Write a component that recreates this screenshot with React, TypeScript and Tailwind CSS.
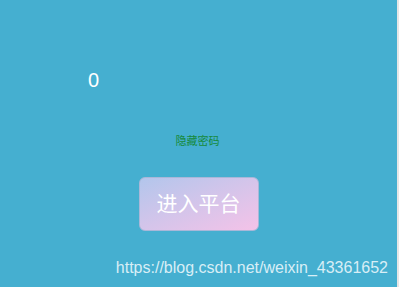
export default function App() {
    return (
        <div className="flex h-[287px] w-[399px] bg-[#e6e6e6]" style={{ fontFamily: '"Liberation Sans", "Noto Sans CJK SC", sans-serif' }}>
            <div className="relative flex h-full w-[397px] flex-col bg-[#45afd0]">
                {/* Counter */}
                <div className="pl-[88px] pt-[66px] text-[20px] leading-[28px] text-white">0</div>

                {/* Toggle link */}
                <div className="mt-[39px] flex justify-center pr-[2px] text-[11px] leading-[16px] text-[#168a3c]">
                    隐藏密码
                </div>

                {/* Enter button */}
                <div className="mt-[28px] flex justify-center">
                    <button className="flex h-[54px] w-[120px] items-center justify-center rounded-[6px] border border-[#a9b7d8] bg-gradient-to-br from-[#b2c6ec] to-[#f4c2e8] text-[21px] text-white">
                        进入平台
                    </button>
                </div>

                {/* Watermark */}
                <div className="absolute bottom-[10px] right-[9px] text-[16px] leading-[18px] text-[#d8eef6]">
                    https://blog.csdn.net/weixin_43361652
                </div>
            </div>
        </div>
    );
}
